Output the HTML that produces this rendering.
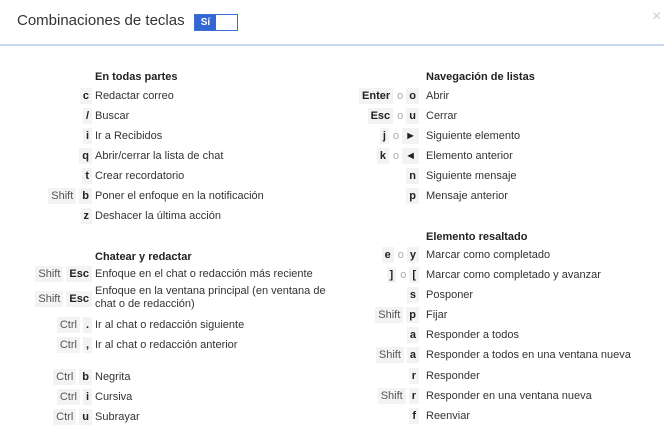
<!DOCTYPE html>
<html><head><meta charset="utf-8"><style>
*{margin:0;padding:0;box-sizing:border-box}
body{width:664px;height:429px;background:#fff;font-family:"Liberation Sans",Arial,sans-serif;font-size:11px;color:#333;position:relative;overflow:hidden}
.title{position:absolute;left:17px;top:12px;font-size:15px;color:#333}
.tog{position:absolute;left:194px;top:14px;width:44px;height:17px;border:1px solid #3b6fd4;background:#fff}
.tog span{position:absolute;left:0;top:0;width:21px;height:15px;background:#3367d6;color:#fff;font-weight:bold;font-size:10px;line-height:15px;text-align:center}
.line{position:absolute;left:0;top:44px;width:664px;height:2px;background:#c5d6ee}
.x{position:absolute;left:652px;top:8px;color:#ccc;font-size:16px}
.r{position:absolute;height:16px;line-height:16px;white-space:nowrap}
.k{position:absolute;text-align:right}
.k b,.k i{display:inline-block;background:#f3f3f3;padding:0 3px;margin-left:3px;color:#222;font-style:normal;line-height:16px}
.k i{font-weight:normal;color:#555}
.k u{text-decoration:none;color:#aaa;margin-left:4px}
.h{font-weight:bold;color:#222}
</style></head><body>
<div class="title">Combinaciones de teclas</div>
<div class="tog"><span>Sí</span></div>
<div class="x">×</div>
<div class="line"></div>
<div id="c"></div>
<script>
var L=[["h","En todas partes",76],[["c"],"Redactar correo",95],[["/"],"Buscar",115],[["i"],"Ir a Recibidos",135],[["q"],"Abrir/cerrar la lista de chat",155],[["t"],"Crear recordatorio",175],[["~Shift","b"],"Poner el enfoque en la notificación",195],[["z"],"Deshacer la última acción",215],
["h","Chatear y redactar",256],[["~Shift","Esc"],"Enfoque en el chat o redacción más reciente",273],[["~Shift","Esc"],"Enfoque en la ventana principal (en ventana de<br>chat o de redacción)",298],[["~Ctrl","."],"Ir al chat o redacción siguiente",324],[["~Ctrl",","],"Ir al chat o redacción anterior",344],[["~Ctrl","b"],"Negrita",376],[["~Ctrl","i"],"Cursiva",396],[["~Ctrl","u"],"Subrayar",416]];
var R=[["h","Navegación de listas",76],[["Enter","|o","o"],"Abrir",95],[["Esc","|o","u"],"Cerrar",115],[["j","|o","►"],"Siguiente elemento",135],[["k","|o","◄"],"Elemento anterior",155],[["n"],"Siguiente mensaje",175],[["p"],"Mensaje anterior",195],
["h","Elemento resaltado",236],[["e","|o","y"],"Marcar como completado",254],[["]","|o","["],"Marcar como completado y avanzar",274],[["s"],"Posponer",294],[["~Shift","p"],"Fijar",314],[["a"],"Responder a todos",334],[["~Shift","a"],"Responder a todos en una ventana nueva",354],[["r"],"Responder",375],[["~Shift","r"],"Responder en una ventana nueva",395],[["f"],"Reenviar",415]];
var h="";
function col(a,kr,dl){a.forEach(function(e){
 var y=e[2]+1;
 if(e[0]=="h"){h+='<div class="r h" style="left:'+dl+'px;top:'+(y-8)+'px">'+e[1]+'</div>';return;}
 var two=e[1].indexOf("<br>")>=0;
 var ks=e[0].map(function(k){if(k[0]=="~")return "<i>"+k.slice(1)+"</i>";if(k[0]=="|")return "<u>"+k.slice(1)+"</u>";return "<b>"+k+"</b>";}).join("");
 h+='<div class="r k" style="right:'+(664-kr)+'px;top:'+(y-8)+'px">'+ks+'</div>';
 h+='<div class="r" style="left:'+dl+'px;top:'+(y-(two?14:8))+'px;line-height:'+(two?'13px':'16px')+';height:auto">'+e[1]+'</div>';
});}
col(L,92,95);col(R,419,426);
document.getElementById("c").innerHTML=h;
</script>
</body></html>
